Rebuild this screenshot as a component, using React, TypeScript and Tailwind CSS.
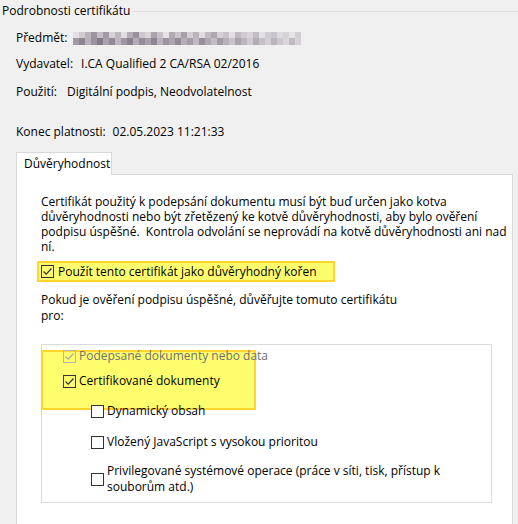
import React from 'react';

// pixelated (censored) subject value
const blurTop = ['#e2e0e3', '#cfcbd1', '#b9b3bc', '#9d94a1', '#c4c0c6', '#a49aa7', '#d6d3d8', '#bdb8c0', '#e0dee1', '#b3aeb6', '#9a919e', '#cbc7cd', '#d9d6da', '#aba4ae', '#c6c2c8', '#e4e2e5', '#b0aab3', '#c9c5cb', '#a59ea9', '#d2cfd4', '#bbb6be', '#dedcdf', '#c1bcc3', '#aea8b1', '#d4d1d6', '#c7c3c9', '#e1dfe2', '#bfbac1', '#cecad0', '#d8d5d9', '#c2bec4', '#e3e1e4', '#d0cdd2', '#c9c6cb', '#dddbde', '#d5d2d6', '#e5e3e6', '#d1ced3'];
const blurBottom = ['#a39aa6', '#8e8593', '#b6b0b9', '#9c93a0', '#857b8a', '#aaa3ad', '#928996', '#bcb6bf', '#a096a3', '#8a808e', '#b1abb4', '#958c99', '#a79fa9', '#8f8694', '#b8b2bb', '#9e95a2', '#aca5af', '#938a97', '#b4aeb7', '#a59da8', '#bfb9c1', '#988f9c', '#aea8b1', '#c2bdc4', '#a29aa5', '#b7b1ba', '#c8c4ca', '#aba4ae', '#bcb7bf', '#cfcbd1', '#b2acb5', '#c5c1c7', '#d3d0d5', '#bab5bd', '#cbc8cd', '#d9d7da', '#c0bbc2', '#d6d3d8'];

function Pixelated() {
  return (
    <svg width="230" height="13" viewBox="0 0 230 13" className="block">
      {blurTop.map((c, i) => (
        <rect key={'t' + i} x={i * 6} y={0} width={6} height={6} fill={c} />
      ))}
      {blurBottom.map((c, i) => (
        <rect key={'b' + i} x={i * 6} y={6} width={6} height={7} fill={c} />
      ))}
    </svg>
  );
}

function CheckBox({ checked, disabled }: { checked?: boolean; disabled?: boolean }) {
  const stroke = disabled ? '#a8a8a8' : '#333333';
  return (
    <span
      className={`flex h-[13px] w-[13px] shrink-0 items-center justify-center border ${disabled ? 'border-[#b5b5b5]' : 'border-[#333333]'} ${checked ? '' : 'bg-white'}`}
    >
      {checked && (
        <svg width="11" height="11" viewBox="0 0 11 11">
          <path d="M1.5 5.5 L4.2 8.2 L9.5 2.5" fill="none" stroke={stroke} strokeWidth="1.2" />
        </svg>
      )}
    </span>
  );
}

const fieldRows = [
  { label: 'Vydavatel:', value: 'I.CA Qualified 2 CA/RSA 02/2016', gap: 'gap-[8px]', mt: 'mt-[10px]' },
  { label: 'Použití:', value: 'Digitální podpis, Neodvolatelnost', gap: 'gap-[10px]', mt: 'mt-[12px]' },
  { label: 'Konec platnosti:', value: '02.05.2023 11:21:33', gap: 'gap-[7px]', mt: 'mt-[24px]' },
];

export default function App() {
  return (
    <div
      className="h-[524px] w-[518px] overflow-hidden bg-[#f0f0f0] text-[12px] leading-[16px] text-[#000]"
      style={{ fontFamily: '"Open Sans", "Noto Sans", sans-serif' }}
    >
      {/* group header */}
      <div className="flex items-center pl-[2px] pt-[3px]">
        <span>Podrobnosti certifikátu</span>
        <div className="ml-[2px] h-px flex-1 bg-[#dcdcdc]" />
      </div>

      <div className="pl-[16px]">
        <div className="mt-[11px] flex h-[16px] items-center gap-[6px]">
          <span>Předmět:</span>
          <Pixelated />
        </div>
        {fieldRows.map((r) => (
          <div key={r.label} className={`${r.mt} flex h-[16px] items-center ${r.gap}`}>
            <span>{r.label}</span>
            <span>{r.value}</span>
          </div>
        ))}
      </div>

      {/* tabs */}
      <div className="mt-[12px] pl-[16px] pr-[5px]">
        <div className="flex">
          <div className="relative z-10 -mb-px flex h-[23px] w-[96px] items-center border border-b-0 border-[#d9d9d9] bg-white pl-[7px]">
            Důvěryhodnost
          </div>
        </div>
        <div className="h-[400px] border border-[#d9d9d9] bg-white pl-[24px] pr-[20px] pt-[19px]">
          <p className="whitespace-nowrap leading-[15px]">
            Certifikát použitý k podepsání dokumentu musí být buď určen jako kotva
            <br />
            důvěryhodnosti nebo být zřetězený ke kotvě důvěryhodnosti, aby bylo ověření
            <br />
            podpisu úspěšné.&nbsp; Kontrola odvolání se neprovádí na kotvě důvěryhodnosti ani nad
            <br />
            ní.
          </p>

          <div className="-ml-[4px] mt-[7px] flex h-[21px] w-[298px] items-center gap-[4px] border-2 border-[#ffd52b] bg-[#ffff6e] pl-[2px]">
            <CheckBox checked />
            <span>Použít tento certifikát jako důvěryhodný kořen</span>
          </div>

          <p className="mt-[10px] whitespace-nowrap leading-[16px]">
            Pokud je ověření podpisu úspěšné, důvěřujte tomuto certifikátu
            <br />
            pro:
          </p>

          {/* permissions list */}
          <div className="relative mt-[20px] h-[159px] border border-[#dcdcdc] bg-white">
            <div className="absolute left-[-1px] top-[5px] h-[60px] w-[215px] border-2 border-[#ffd52b] bg-[#ffff6e]" />
            <div className="relative pl-[21px] pt-[3px]">
              <div className="flex h-[16px] items-center gap-[3px] text-[#707070]">
                <CheckBox checked disabled />
                <span>Podepsané dokumenty nebo data</span>
              </div>
              <div className="mt-[9px] flex h-[16px] items-center gap-[3px]">
                <CheckBox checked />
                <span>Certifikované dokumenty</span>
              </div>
              <div className="pl-[28px]">
                <div className="mt-[14px] flex h-[16px] items-center gap-[3px]">
                  <CheckBox />
                  <span>Dynamický obsah</span>
                </div>
                <div className="mt-[15px] flex h-[16px] items-center gap-[3px]">
                  <CheckBox />
                  <span>Vložený JavaScript s vysokou prioritou</span>
                </div>
                <div className="mt-[13px] flex items-center gap-[3px]">
                  <CheckBox />
                  <span className="whitespace-nowrap">
                    Privilegované systémové operace (práce v síti, tisk, přístup k
                    <br />
                    souborům atd.)
                  </span>
                </div>
              </div>
            </div>
          </div>
        </div>
      </div>
    </div>
  );
}
